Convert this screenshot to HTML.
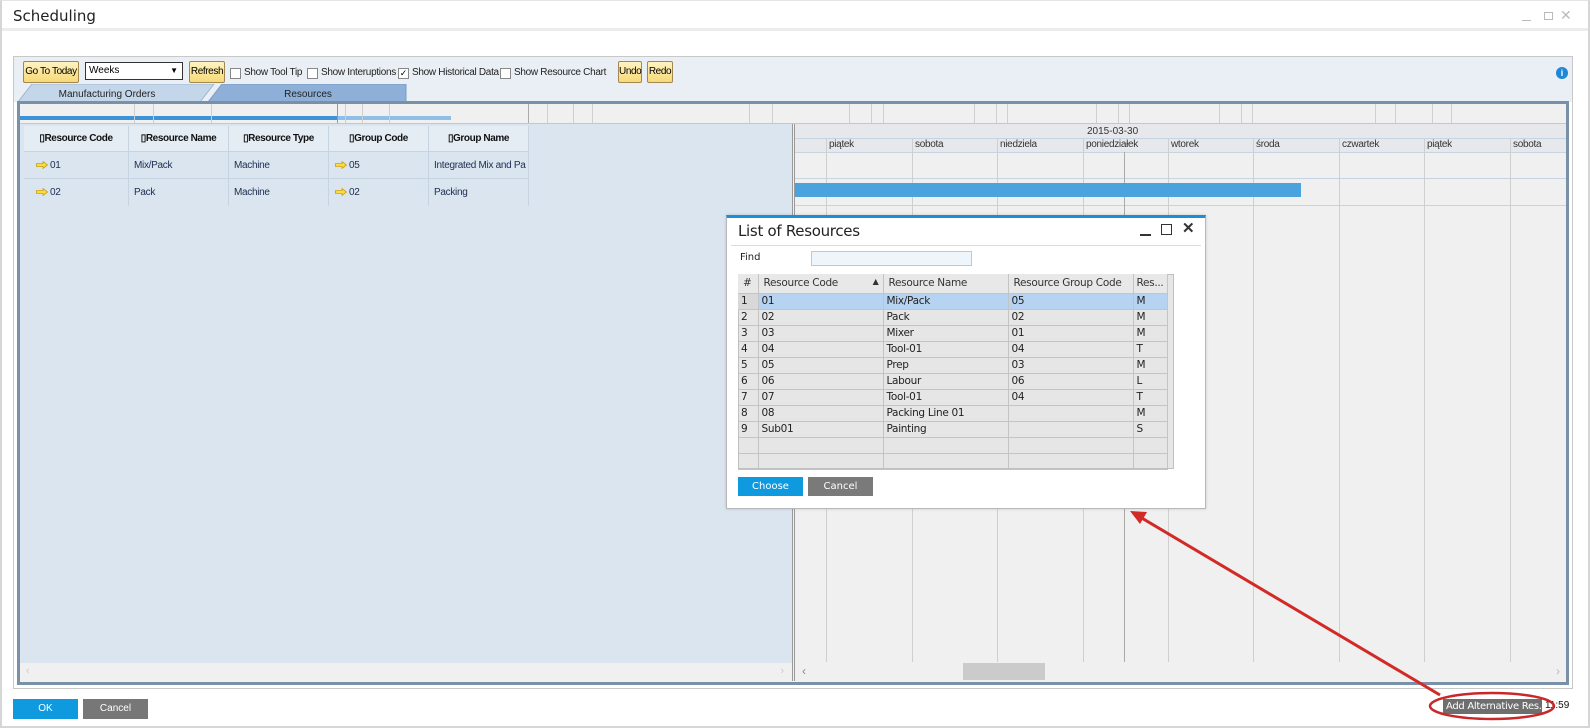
<!DOCTYPE html>
<html><head><meta charset="utf-8"><style>
*{box-sizing:border-box;margin:0;padding:0}
body{width:1590px;height:728px;position:relative;background:#fff;font-family:"Liberation Sans",sans-serif;overflow:hidden}
.a{position:absolute}
.btn{position:absolute;background:linear-gradient(#fff3c0,#f7d978);border:1px solid #a08850;border-radius:2px;font-size:10px;letter-spacing:-0.4px;color:#000;text-align:center;line-height:20px}
.cb{position:absolute;width:11px;height:11px;border:1px solid #888;background:#fff;top:68px}
.tl{position:absolute;font-size:10px;top:67px;letter-spacing:-0.3px;color:#222}
.hd{position:absolute;top:126px;height:26px;font-size:10px;font-weight:bold;line-height:26px;text-align:center;border-right:1px solid #c6d3e0;letter-spacing:-0.4px;color:#111}
.cell{position:absolute;height:27px;line-height:27px;font-size:10px;color:#203050;padding-left:5px;border-right:1px solid #c6d3e0;letter-spacing:-0.3px}
.ar{display:inline-block;width:12px;height:8px;margin-right:2px;vertical-align:-1px}
.vl{position:absolute;width:1px;background:#cfcfcf}
.day{position:absolute;top:139px;font-size:10px;color:#333;letter-spacing:-0.3px}
.dt td{height:16px;border-right:1px solid #c4c4c4;border-bottom:1px solid #c4c4c4;font-size:10.5px;padding-left:3px;color:#222;font-family:"DejaVu Sans",sans-serif;letter-spacing:-0.3px;white-space:nowrap;overflow:hidden}
.dt th{height:19px;font-weight:normal;text-align:left;font-size:10.5px;padding-left:5px;border-right:1px solid #c4c4c4;border-bottom:1px solid #c4c4c4;background:#e8e8e8;color:#333;font-family:"DejaVu Sans",sans-serif;letter-spacing:-0.3px;white-space:nowrap;overflow:hidden}
</style></head><body>
<div class="a" style="left:0;top:0;width:1590px;height:728px;border:2px solid #d6d6d6;border-top:1px solid #e5e5e5"></div>
<div class="a" style="left:13px;top:7px;font-size:15px;color:#222;font-family:'DejaVu Sans',sans-serif">Scheduling</div>
<div class="a" style="left:2px;top:28px;width:1586px;height:3px;background:#ececec"></div>
<div class="a" style="left:1522px;top:20px;width:9px;height:1px;background:#bbb"></div>
<div class="a" style="left:1544px;top:12px;width:9px;height:8px;border:1px solid #bbb"></div>
<div class="a" style="left:1560px;top:7px;font-size:14px;color:#bbb">✕</div>
<div class="a" style="left:13px;top:56px;width:1560px;height:633px;border:1px solid #c8c8c8"></div>
<div class="a" style="left:14px;top:57px;width:1558px;height:45px;background:#e9eff5"></div>
<div class="a" style="left:1556px;top:67px;width:12px;height:12px;border-radius:50%;background:#1e88d6;color:#fff;font-size:9px;font-weight:bold;text-align:center;line-height:12px">i</div>
<div class="btn" style="left:23px;top:61px;width:56px;height:22px">Go To Today</div>
<div class="a" style="left:85px;top:62px;width:98px;height:18px;border:1px solid #333;background:#fff;font-size:10px;padding-left:3px;line-height:16px">Weeks<span style="position:absolute;right:4px;top:0;font-size:8px">▼</span></div>
<div class="btn" style="left:189px;top:61px;width:36px;height:22px">Refresh</div>
<div class="cb" style="left:230px"></div><div class="tl" style="left:244px">Show Tool Tip</div>
<div class="cb" style="left:307px"></div><div class="tl" style="left:321px">Show Interuptions</div>
<div class="cb" style="left:398px;font-size:9px;line-height:9px;text-align:center">✓</div><div class="tl" style="left:412px">Show Historical Data</div>
<div class="cb" style="left:500px"></div><div class="tl" style="left:514px">Show Resource Chart</div>
<div class="btn" style="left:618px;top:61px;width:24px;height:22px">Undo</div>
<div class="btn" style="left:647px;top:61px;width:26px;height:22px">Redo</div>
<svg class="a" style="left:18px;top:84px" width="400" height="19">
<polygon points="0,18 14,0 196,0 182,18" fill="#c4d6ea" stroke="#9fb6cf"/>
<polygon points="190,18 204,0 388,0 388,18" fill="#8eb0d8" stroke="#7a9cc4"/>
<text x="89" y="13" font-size="10" font-family="Liberation Sans" fill="#222" text-anchor="middle">Manufacturing Orders</text>
<text x="290" y="13" font-size="10" font-family="Liberation Sans" fill="#222" text-anchor="middle">Resources</text>
</svg>
<div class="a" style="left:17px;top:101px;width:1552px;height:584px;border:3px solid #7890a8;background:#f0f0f0"></div>
<div class="a" style="left:20px;top:104px;width:1546px;height:20px;background:#f0f0f0"></div>
<div class="a" style="left:20px;top:116px;width:317px;height:4px;background:#3d93d8"></div>
<div class="a" style="left:337px;top:116px;width:114px;height:4px;background:#8dbfe8"></div>
<div class="vl" style="left:134px;top:104px;height:20px"></div><div class="vl" style="left:153px;top:104px;height:20px"></div>
<div class="vl" style="left:211px;top:104px;height:20px"></div><div class="vl" style="left:337px;top:104px;height:20px;background:#999"></div>
<div class="vl" style="left:345px;top:104px;height:20px"></div><div class="vl" style="left:362px;top:104px;height:20px"></div>
<div class="vl" style="left:389px;top:104px;height:20px"></div><div class="vl" style="left:528px;top:104px;height:20px;background:#aaa"></div>
<div class="vl" style="left:547px;top:104px;height:20px"></div><div class="vl" style="left:573px;top:104px;height:20px"></div>
<div class="vl" style="left:592px;top:104px;height:20px"></div>
<div class="vl" style="left:749px;top:104px;height:20px"></div><div class="vl" style="left:772px;top:104px;height:20px"></div>
<div class="vl" style="left:849px;top:104px;height:20px"></div><div class="vl" style="left:871px;top:104px;height:20px"></div>
<div class="vl" style="left:883px;top:104px;height:20px"></div><div class="vl" style="left:974px;top:104px;height:20px"></div>
<div class="vl" style="left:996px;top:104px;height:20px"></div><div class="vl" style="left:1007px;top:104px;height:20px"></div>
<div class="vl" style="left:1096px;top:104px;height:20px"></div><div class="vl" style="left:1118px;top:104px;height:20px"></div>
<div class="vl" style="left:1129px;top:104px;height:20px"></div><div class="vl" style="left:1219px;top:104px;height:20px"></div>
<div class="vl" style="left:1241px;top:104px;height:20px"></div><div class="vl" style="left:1252px;top:104px;height:20px"></div>
<div class="vl" style="left:1375px;top:104px;height:20px"></div><div class="vl" style="left:1395px;top:104px;height:20px"></div>
<div class="vl" style="left:1432px;top:104px;height:20px"></div><div class="vl" style="left:1451px;top:104px;height:20px"></div>
<div class="a" style="left:20px;top:123px;width:1546px;height:1px;background:#c0c8d0"></div>
<div class="a" style="left:20px;top:124px;width:772px;height:539px;background:#dae5f0"></div>
<div class="a" style="left:24px;top:126px;width:505px;height:26px;background:#e4ecf4;border-bottom:1px solid #c6d3e0"></div>
<div class="hd" style="left:24px;width:105px">▯Resource Code</div>
<div class="hd" style="left:129px;width:100px">▯Resource Name</div>
<div class="hd" style="left:229px;width:100px">▯Resource Type</div>
<div class="hd" style="left:329px;width:100px">▯Group Code</div>
<div class="hd" style="left:429px;width:100px">▯Group Name</div>
<div class="a" style="left:24px;top:178px;width:505px;height:1px;background:#c6d3e0"></div>
<div class="cell" style="left:24px;top:152px;width:105px;padding-left:12px"><svg class="ar" viewBox="0 0 12 8"><path d="M0.5 2.5H7V0.5L11.5 4L7 7.5V5.5H0.5Z" fill="#f8dc40" stroke="#c9a010" stroke-width="0.8"/></svg>01</div>
<div class="cell" style="left:129px;top:152px;width:100px">Mix/Pack</div>
<div class="cell" style="left:229px;top:152px;width:100px">Machine</div>
<div class="cell" style="left:329px;top:152px;width:100px;padding-left:6px"><svg class="ar" viewBox="0 0 12 8"><path d="M0.5 2.5H7V0.5L11.5 4L7 7.5V5.5H0.5Z" fill="#f8dc40" stroke="#c9a010" stroke-width="0.8"/></svg>05</div>
<div class="cell" style="left:429px;top:152px;width:100px">Integrated Mix and Pa</div>
<div class="cell" style="left:24px;top:179px;width:105px;padding-left:12px"><svg class="ar" viewBox="0 0 12 8"><path d="M0.5 2.5H7V0.5L11.5 4L7 7.5V5.5H0.5Z" fill="#f8dc40" stroke="#c9a010" stroke-width="0.8"/></svg>02</div>
<div class="cell" style="left:129px;top:179px;width:100px">Pack</div>
<div class="cell" style="left:229px;top:179px;width:100px">Machine</div>
<div class="cell" style="left:329px;top:179px;width:100px;padding-left:6px"><svg class="ar" viewBox="0 0 12 8"><path d="M0.5 2.5H7V0.5L11.5 4L7 7.5V5.5H0.5Z" fill="#f8dc40" stroke="#c9a010" stroke-width="0.8"/></svg>02</div>
<div class="cell" style="left:429px;top:179px;width:100px">Packing</div>
<div class="a" style="left:20px;top:663px;width:772px;height:18px;background:#f0f0f0;font-size:11px;color:#ccc"><span style="position:absolute;left:6px;top:2px">‹</span><span style="position:absolute;right:8px;top:2px">›</span></div>
<div class="a" style="left:792px;top:124px;width:1px;height:557px;background:#999"></div>
<div class="a" style="left:794px;top:124px;width:1px;height:557px;background:#999"></div>
<div class="a" style="left:795px;top:124px;width:771px;height:28px;background:#e6e8ec"></div>
<div class="a" style="left:795px;top:138px;width:771px;height:1px;background:#c6d3e0"></div>
<div class="a" style="left:795px;top:152px;width:771px;height:1px;background:#c6d3e0"></div>
<div class="a" style="left:795px;top:178px;width:771px;height:1px;background:#c6d3e0"></div>
<div class="a" style="left:795px;top:205px;width:771px;height:1px;background:#c6d3e0"></div>
<div class="a" style="left:1087px;top:126px;font-size:10px;color:#333">2015-03-30</div>
<div class="vl" style="left:826px;top:139px;height:523px"></div>
<div class="vl" style="left:912px;top:139px;height:523px"></div>
<div class="vl" style="left:997px;top:139px;height:523px"></div>
<div class="vl" style="left:1083px;top:139px;height:523px"></div>
<div class="vl" style="left:1124px;top:152px;height:510px;background:#aaa"></div>
<div class="vl" style="left:1168px;top:139px;height:523px"></div>
<div class="vl" style="left:1253px;top:139px;height:523px"></div>
<div class="vl" style="left:1339px;top:139px;height:523px"></div>
<div class="vl" style="left:1424px;top:139px;height:523px"></div>
<div class="vl" style="left:1510px;top:139px;height:523px"></div>
<div class="day" style="left:829px">piątek</div><div class="day" style="left:915px">sobota</div>
<div class="day" style="left:1000px">niedziela</div><div class="day" style="left:1086px">poniedziałek</div>
<div class="day" style="left:1171px">wtorek</div><div class="day" style="left:1256px">środa</div>
<div class="day" style="left:1342px">czwartek</div><div class="day" style="left:1427px">piątek</div>
<div class="day" style="left:1513px">sobota</div>
<div class="a" style="left:795px;top:183px;width:506px;height:14px;background:#4aa3dc"></div>
<div class="a" style="left:795px;top:663px;width:771px;height:18px;background:#f0f0f0;font-size:12px;color:#888"><span style="position:absolute;left:7px;top:1px">‹</span><span style="position:absolute;right:6px;top:1px;color:#bbb">›</span></div>
<div class="a" style="left:963px;top:663px;width:82px;height:17px;background:#cbcbcb"></div>
<div class="a" style="left:726px;top:215px;width:480px;height:294px;background:#fff;border:1px solid #b8b8b8;border-top:3px solid #1a8fd8;box-shadow:0 0 3px rgba(0,0,0,.15)"></div>
<div class="a" style="left:738px;top:222px;font-size:15px;color:#222;font-family:'DejaVu Sans',sans-serif;letter-spacing:-0.3px">List of Resources</div>
<div class="a" style="left:1140px;top:234px;width:11px;height:2px;background:#333"></div>
<div class="a" style="left:1161px;top:224px;width:11px;height:11px;border:1.5px solid #333"></div>
<div class="a" style="left:1182px;top:219px;font-size:15px;font-weight:bold;color:#333">✕</div>
<div class="a" style="left:731px;top:245px;width:470px;height:1px;background:#ddd"></div>
<div class="a" style="left:740px;top:252px;font-size:10px;color:#222;font-family:'DejaVu Sans',sans-serif">Find</div>
<div class="a" style="left:811px;top:251px;width:161px;height:15px;border:1px solid #bcc;background:#eef5fb"></div>
<div class="a" style="left:738px;top:274px;width:436px;height:195px;background:#e6e6e6;border:1px solid #c0c0c0"></div>
<table class="a dt" style="left:738px;top:274px;border-collapse:collapse;table-layout:fixed;width:429px">
<colgroup><col style="width:20px"><col style="width:125px"><col style="width:125px"><col style="width:125px"><col style="width:34px"></colgroup>
<tr><th>#</th><th>Resource Code<span style="float:right;margin-right:4px;font-size:8px">▲</span></th><th>Resource Name</th><th>Resource Group Code</th><th style="padding-left:3px">Res...</th></tr>
<tr style="background:#b6d3f2"><td style="background:#d8d8d8">1</td><td>01</td><td>Mix/Pack</td><td>05</td><td>M</td></tr>
<tr><td>2</td><td>02</td><td>Pack</td><td>02</td><td>M</td></tr>
<tr><td>3</td><td>03</td><td>Mixer</td><td>01</td><td>M</td></tr>
<tr><td>4</td><td>04</td><td>Tool-01</td><td>04</td><td>T</td></tr>
<tr><td>5</td><td>05</td><td>Prep</td><td>03</td><td>M</td></tr>
<tr><td>6</td><td>06</td><td>Labour</td><td>06</td><td>L</td></tr>
<tr><td>7</td><td>07</td><td>Tool-01</td><td>04</td><td>T</td></tr>
<tr><td>8</td><td>08</td><td>Packing Line 01</td><td></td><td>M</td></tr>
<tr><td>9</td><td>Sub01</td><td>Painting</td><td></td><td>S</td></tr>
<tr><td></td><td></td><td></td><td></td><td></td></tr>
<tr><td></td><td></td><td></td><td></td><td></td></tr>
</table>
<div class="a" style="left:738px;top:477px;width:65px;height:19px;background:#0f9ae0;color:#fff;font-size:10px;text-align:center;line-height:19px;font-family:'DejaVu Sans',sans-serif">Choose</div>
<div class="a" style="left:808px;top:477px;width:65px;height:19px;background:#7a7a7a;color:#fff;font-size:10px;text-align:center;line-height:19px;font-family:'DejaVu Sans',sans-serif">Cancel</div>
<div class="a" style="left:13px;top:699px;width:65px;height:20px;background:#0f9ae0;color:#fff;font-size:10px;text-align:center;line-height:20px">OK</div>
<div class="a" style="left:83px;top:699px;width:65px;height:20px;background:#777;color:#fff;font-size:10px;text-align:center;line-height:20px">Cancel</div>
<div class="a" style="left:1443px;top:699px;width:99px;height:15px;background:#6e6e6e;color:#fff;font-size:10px;line-height:15px;padding-left:3px;font-family:'DejaVu Sans',sans-serif;letter-spacing:-0.3px;white-space:nowrap;overflow:hidden">Add Alternative Res...</div>
<div class="a" style="left:1545px;top:700px;font-size:10px;color:#111">11:59</div>
<svg class="a" style="left:0;top:0" width="1590" height="728">
<ellipse cx="1492" cy="706" rx="62" ry="13" fill="none" stroke="#c8282a" stroke-width="2.5"/>
<line x1="1440" y1="695" x2="1140" y2="517" stroke="#d22a26" stroke-width="3"/>
<polygon points="1130,511 1147,512 1140,524" fill="#d22a26"/>
</svg>
</body></html>
